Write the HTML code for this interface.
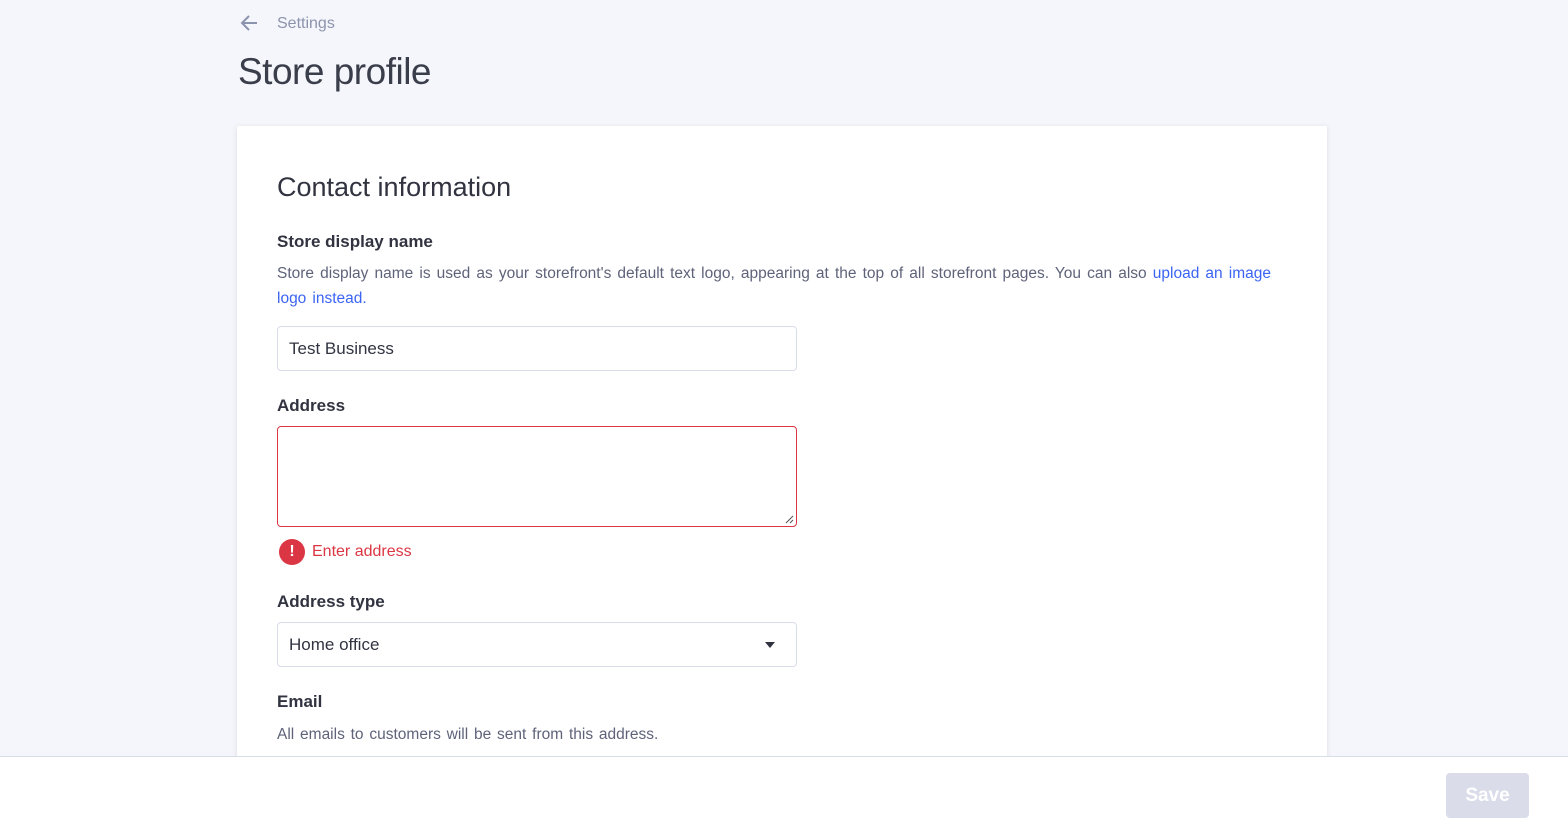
<!DOCTYPE html>
<html><head><style>
*{box-sizing:border-box;margin:0;padding:0}
body{width:1568px;height:827px;overflow:hidden;background:#f5f6fb;font-family:"Liberation Sans",sans-serif;color:#313440;position:relative}
.back{position:absolute;left:240px;top:13px;font-size:15px;color:#8c93ad}
.back span{position:absolute;left:37px;top:2px;white-space:nowrap;font-size:16px}
h1{position:absolute;left:238px;top:51px;font-size:37px;font-weight:300;color:#3a3d4a;letter-spacing:-0.5px}
.card{position:absolute;left:237px;top:126px;width:1090px;height:700px;background:#fff;box-shadow:0 1px 6px rgba(49,52,64,.12);border-radius:2px}
.abs{position:absolute}
h2{position:absolute;left:40px;top:46px;font-size:27px;font-weight:400;color:#313440}
.lbl{font-size:17px;font-weight:bold;color:#313440}
.desc{font-size:15.5px;color:#5e637a;line-height:25px;white-space:nowrap}
a{color:#3c64f4;text-decoration:none}
.inp{position:absolute;left:40px;width:520px;height:45px;border:1px solid #d9dce9;border-radius:4px;font-size:17px;padding:12px 11px;color:#313440}
.footer{position:absolute;left:0;top:756px;width:1568px;height:71px;background:#fff;border-top:1px solid #d9dce9}
.save{position:absolute;left:1446px;top:16px;width:83px;height:45px;background:#dadcea;border-radius:4px;color:#fff;font-weight:bold;font-size:19px;text-align:center;line-height:45px}
</style></head><body>
<div class="back"><svg width="20" height="20" viewBox="0 0 20 20"><path d="M17 10H3M9 3L2 10l7 7" stroke="#8c93ad" stroke-width="2" fill="none"/></svg><span>Settings</span></div>
<h1>Store profile</h1>
<div class="card">
<h2>Contact information</h2>
<div class="abs lbl" style="left:40px;top:106px">Store display name</div>
<div class="abs desc" style="left:40px;top:135px;word-spacing:1.8px">Store display name is used as your storefront's default text logo, appearing at the top of all storefront pages. You can also <a>upload an image</a><br><a>logo instead.</a></div>
<div class="inp" style="top:200px">Test Business</div>
<div class="abs lbl" style="left:40px;top:270px">Address</div>
<div class="inp" style="top:300px;height:101px;border-color:#db3643"><svg style="position:absolute;right:2px;bottom:2px" width="10" height="10"><path d="M9 2L2 9M9 6L6 9" stroke="#555" stroke-width="1"/></svg></div>
<div class="abs" style="left:42px;top:413px;width:26px;height:26px;border-radius:50%;background:#db3643;color:#fff;font-weight:bold;text-align:center;line-height:26px;font-size:16px">!</div>
<div class="abs" style="left:75px;top:417px;font-size:16px;color:#db3643">Enter address</div>
<div class="abs lbl" style="left:40px;top:466px">Address type</div>
<div class="inp" style="top:496px">Home office<svg style="position:absolute;right:21px;top:19px" width="10" height="6"><path d="M0 0h10L5 6z" fill="#313440"/></svg></div>
<div class="abs lbl" style="left:40px;top:566px">Email</div>
<div class="abs desc" style="left:40px;top:596px;word-spacing:1.5px">All emails to customers will be sent from this address.</div>
</div>
<div class="footer"><div class="save">Save</div></div>
</body></html>
